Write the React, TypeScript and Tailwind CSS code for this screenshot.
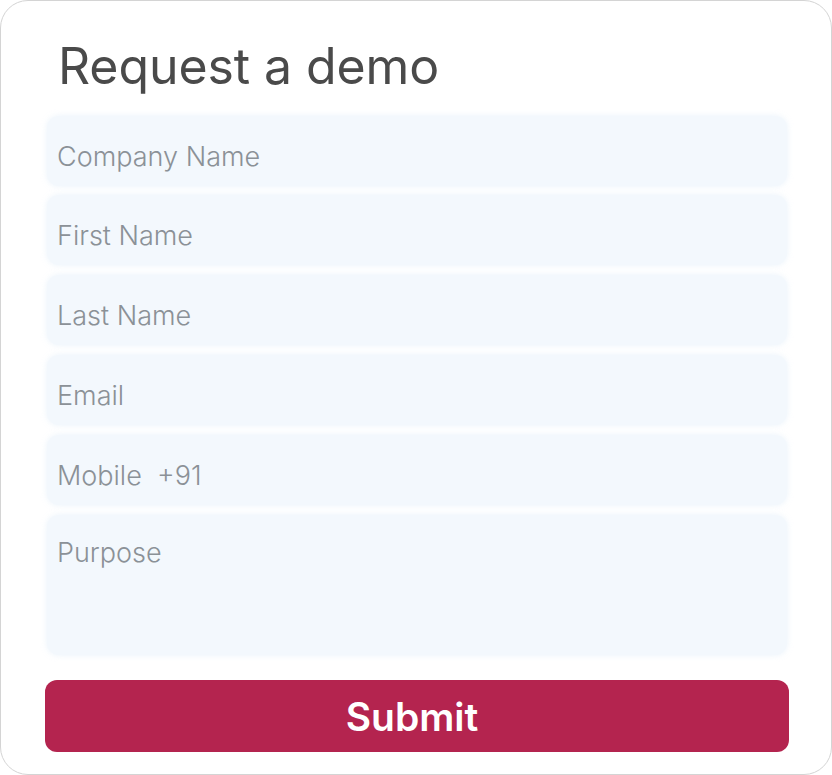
import React from "react";

const fields = ["Company Name", "First Name", "Last Name", "Email", "Mobile  +91"];

export default function App() {
  return (
    <div
      className="w-[832px] h-[775px] bg-white"
      style={{ fontFamily: "Inter, 'Noto Sans', sans-serif" }}
    >
      <div className="w-full h-full box-border border border-[#d4d4d4] rounded-[28px] bg-white pl-[44px] pr-[42px] pt-[40px]">
        <h1 className="text-[50px] leading-[50px] font-normal text-[#4a4a4a] pl-[13px] m-0 tracking-[-0.1px]">
          Request a demo
        </h1>
        <form className="flex flex-col mt-[25px]" onSubmit={(e) => e.preventDefault()}>
          <div className="flex flex-col gap-[10px] pl-[2px] pr-[2px]">
            {fields.map((f, i) => (
              <input
                key={f}
                placeholder={f}
                className={`w-full h-[70px] box-border rounded-[12px] bg-[#f3f8fd] pl-[10px] pt-[11px] text-[27px] font-light text-[#4a4a4a] placeholder:text-[#8b9197] outline-none shadow-[0_0_6px_rgba(225,238,250,0.7)] ${i === 1 ? "-mt-[1px]" : ""}`}
                style={{ fontFamily: "Inter, 'Noto Sans', sans-serif" }}
              />
            ))}
            <textarea
              placeholder="Purpose"
              className="w-full h-[140px] box-border rounded-[12px] bg-[#f3f8fd] pl-[10px] pt-[18px] text-[27px] leading-[39px] font-light text-[#4a4a4a] placeholder:text-[#8b9197] outline-none resize-none shadow-[0_0_6px_rgba(225,238,250,0.7)]"
              style={{ fontFamily: "Inter, 'Noto Sans', sans-serif" }}
            />
          </div>
          <button
            type="submit"
            className="mt-[25px] w-full h-[72px] rounded-[12px] bg-[#b4244f] text-white text-[39px] font-semibold leading-none pr-[10px]"
            style={{ fontFamily: "Inter, 'Noto Sans', sans-serif" }}
          >
            Submit
          </button>
        </form>
      </div>
    </div>
  );
}
